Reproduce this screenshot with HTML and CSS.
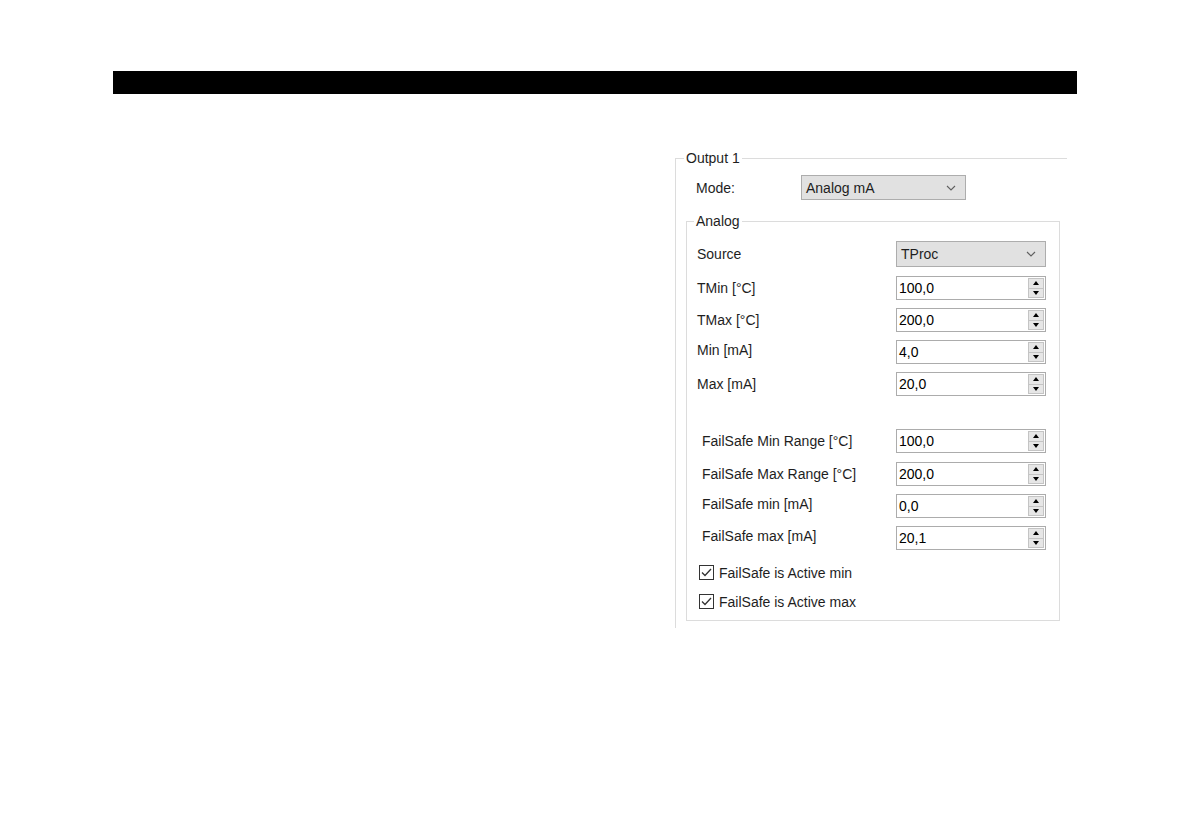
FILE: index.html
```html
<!DOCTYPE html>
<html lang="en">
  <head>
    <meta charset="UTF-8" />
    <title>Output settings</title>
    <link rel="stylesheet" href="styles.css">
  </head>
  <body>
    <div class="topbar"></div>

    <div class="page">
      <fieldset class="group output">
        <legend>Output 1</legend>
        <div class="output-body">
          <div class="row mode-row">
            <span class="label">Mode:</span>
            <div class="select mode-select">
              <span>Analog mA</span>
              <svg class="chevron" width="10" height="6" viewBox="0 0 10 6"><path d="M1 1l4 4 4-4" fill="none" stroke="#606060" stroke-width="1.1"/></svg>
            </div>
          </div>

          <fieldset class="group analog">
            <legend>Analog</legend>
            <div class="analog-body">
              <div class="row source-row">
                <span class="label">Source</span>
                <div class="select field">
                  <span>TProc</span>
                  <svg class="chevron" width="10" height="6" viewBox="0 0 10 6"><path d="M1 1l4 4 4-4" fill="none" stroke="#606060" stroke-width="1.1"/></svg>
                </div>
              </div>

              <div class="row">
                <span class="label">TMin [°C]</span>
                <div class="spin field"><span>100,0</span><div class="btns"><i class="up"></i><i class="down"></i></div></div>
              </div>
              <div class="row">
                <span class="label">TMax [°C]</span>
                <div class="spin field"><span>200,0</span><div class="btns"><i class="up"></i><i class="down"></i></div></div>
              </div>
              <div class="row">
                <span class="label lift">Min [mA]</span>
                <div class="spin field"><span>4,0</span><div class="btns"><i class="up"></i><i class="down"></i></div></div>
              </div>
              <div class="row">
                <span class="label">Max [mA]</span>
                <div class="spin field"><span>20,0</span><div class="btns"><i class="up"></i><i class="down"></i></div></div>
              </div>

              <div class="row failsafe first">
                <span class="label">FailSafe Min Range [°C]</span>
                <div class="spin field"><span>100,0</span><div class="btns"><i class="up"></i><i class="down"></i></div></div>
              </div>
              <div class="row failsafe">
                <span class="label">FailSafe Max Range [°C]</span>
                <div class="spin field"><span>200,0</span><div class="btns"><i class="up"></i><i class="down"></i></div></div>
              </div>
              <div class="row failsafe">
                <span class="label lift">FailSafe min [mA]</span>
                <div class="spin field"><span>0,0</span><div class="btns"><i class="up"></i><i class="down"></i></div></div>
              </div>
              <div class="row failsafe">
                <span class="label lift">FailSafe max [mA]</span>
                <div class="spin field"><span>20,1</span><div class="btns"><i class="up"></i><i class="down"></i></div></div>
              </div>

              <label class="check first-check">
                <span class="box"><svg width="11" height="9" viewBox="0 0 11 9"><path d="M1 4.5l3 3 6-6.5" fill="none" stroke="#333" stroke-width="1.3"/></svg></span>
                FailSafe is Active min
              </label>
              <label class="check">
                <span class="box"><svg width="11" height="9" viewBox="0 0 11 9"><path d="M1 4.5l3 3 6-6.5" fill="none" stroke="#333" stroke-width="1.3"/></svg></span>
                FailSafe is Active max
              </label>
            </div>
          </fieldset>
        </div>
      </fieldset>
    </div>
  </body>
</html>
```

FILE: styles.css
```css
body {
  margin: 0;
  background: #fff;
  font-family: "Liberation Sans", Arial, sans-serif;
  font-size: 14px;
  color: #1e1e1e;
}

.topbar {
  margin: 71px 0 0 113px;
  width: 964px;
  height: 23px;
  background: #000;
}

.page {
  padding: 56px 0 0 675px;
}

.group {
  margin: 0;
  padding: 0;
  min-width: 0;
  border: 1px solid #dcdcdc;
}
.group > legend {
  padding: 0 2px;
  line-height: 16px;
}

.output {
  width: 391px;
  border-right: none;
  border-bottom: none;
}
.output > legend {
  margin-left: 8px;
}
.output-body {
  padding: 9px 0 7px 10px;
}

.row {
  display: flex;
  align-items: center;
  justify-content: space-between;
  height: 24px;
  margin-top: 8px;
}
.label.lift {
  margin-top: -4px;
}

.mode-row {
  margin-top: 0;
  height: 25px;
  justify-content: flex-start;
  padding-left: 10px;
}
.mode-row .label {
  width: 105px;
}

.select {
  display: flex;
  align-items: center;
  justify-content: space-between;
  box-sizing: border-box;
  background: #e1e1e1;
  border: 1px solid #adadad;
  padding: 0 9px 0 4px;
}
.mode-select {
  width: 165px;
  height: 25px;
}

.analog {
  width: 374px;
  box-sizing: border-box;
  margin-top: 13px;
}
.analog > legend {
  margin-left: 7px;
}
.analog-body {
  padding: 12px 13px 10px 10px;
}

.field {
  width: 150px;
  height: 24px;
  box-sizing: border-box;
}

.source-row {
  margin-top: 0;
  height: 26px;
}
.source-row .field {
  height: 26px;
}
.source-row + .row {
  margin-top: 9px;
}

.spin {
  display: flex;
  align-items: center;
  justify-content: space-between;
  border: 1px solid #acacac;
  background: #fff;
  padding: 0 1px 0 2px;
  color: #000;
}
.btns {
  display: flex;
  flex-direction: column;
  width: 16px;
  height: 20px;
}
.btns i {
  flex: 1;
  display: flex;
  align-items: center;
  justify-content: center;
  background: #e6e6e6;
  border: 1px solid #c4c4c4;
}
.btns i + i {
  border-top: none;
}
.btns i::after {
  content: "";
  border-left: 3.5px solid transparent;
  border-right: 3.5px solid transparent;
}
.btns .up::after {
  border-bottom: 4px solid #000;
}
.btns .down::after {
  border-top: 4px solid #000;
}

.failsafe {
  padding-left: 5px;
}
.failsafe.first {
  margin-top: 33px;
}
.failsafe + .failsafe {
  margin-top: 9px;
}
.failsafe + .failsafe + .failsafe {
  margin-top: 8px;
}

.check {
  display: flex;
  align-items: center;
  gap: 5px;
  height: 17px;
  margin-top: 12px;
  padding-left: 2px;
}
.check.first-check {
  margin-top: 14px;
}
.box {
  display: flex;
  align-items: center;
  justify-content: center;
  width: 13px;
  height: 13px;
  border: 1px solid #333;
  background: #fff;
}
```
